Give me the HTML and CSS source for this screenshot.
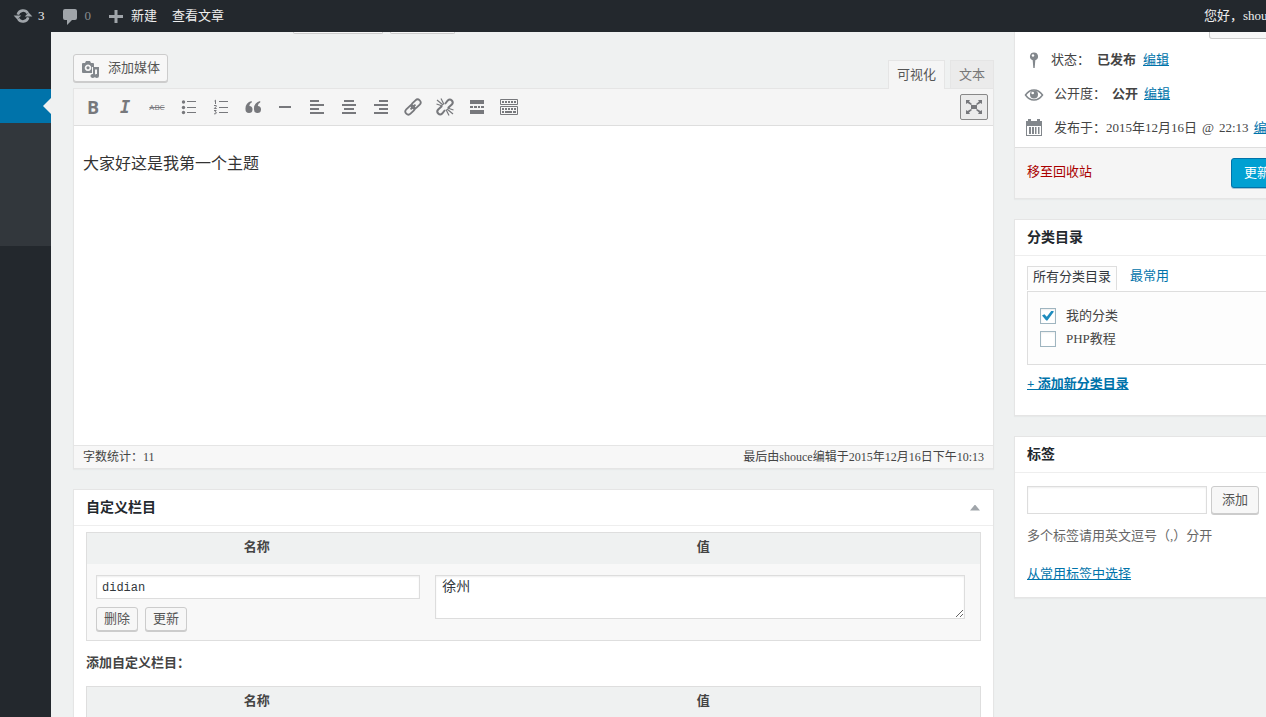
FILE: index.html
```html
<!DOCTYPE html>
<html lang="zh-CN">
<head>
<meta charset="utf-8">
<title>编辑文章</title>
<link rel="stylesheet" href="styles.css">
</head>
<body>
<header class="adminbar">
  <a class="bar-item" href="#"><svg class="bar-icon" viewBox="0 0 20 20"><path fill="none" stroke="currentColor" stroke-width="2.6" d="M4.8 8.600A5.500 5.500 0 0 1 14.800 7.200M15.200 11.400A5.500 5.500 0 0 1 5.200 12.800"/><path fill="currentColor" d="M11.800 10.600h7.600l-3.800-4.200zM.6 9.400h7.600l-3.800 4.200z"/></svg><span>3</span></a>
  <a class="bar-item muted" href="#"><svg class="bar-icon" viewBox="0 0 20 20"><path fill="currentColor" d="M5 3h10q2 0 2 2v7q0 2-2 2h-3l-5 5v-5H5q-2 0-2-2V5q0-2 2-2z"/></svg><span>0</span></a>
  <a class="bar-item" href="#"><svg class="bar-icon" viewBox="0 0 20 20"><path fill="currentColor" d="M8.500 4h3v5H17v3h-5.500v5h-3v-5H3V9h5.500z"/></svg><span>新建</span></a>
  <a class="bar-item" href="#">查看文章</a>
  <a class="bar-item account" href="#">您好，shouce</a>
</header>
<div class="frame">
  <nav class="menu" aria-label="菜单">
    <a class="menu-current" href="#" aria-label="文章"></a>
    <div class="submenu"></div>
  </nav>
  <div class="content">
    <main class="primary">
      <div class="permalink"><span class="cut cut-a"></span><span class="cut cut-b"></span></div>
      <div class="editor-tools">
        <button class="btn media" type="button"><svg class="icon" viewBox="0 0 20 20"><path fill="currentColor" fill-rule="evenodd" d="M2 3h2l1-2h4l1 2h2q1 0 1 1v3H11v6H2q-1 0-1-1V4q0-1 1-1zm5 1.500a3.300 3.300 0 1 0 .01 0zm0 1.700a1.600 1.600 0 1 1-.01 0z"/><path fill="currentColor" d="M12 7h6v9a2.300 2 0 1 1-2-2v-4.500h-2V16a2.300 2 0 1 1-2-2z"/></svg>添加媒体</button>
        <div class="tabs">
          <button class="tab active" type="button">可视化</button>
          <button class="tab" type="button">文本</button>
        </div>
      </div>
      <section class="editor">
        <div class="toolbar">
          <button class="tool bold" type="button">B</button>
          <button class="tool italic" type="button">I</button>
          <button class="tool strike" type="button">ABC</button>
          <button class="tool" type="button" aria-label="项目列表"><svg class="icon" viewBox="0 0 20 20"><g fill="currentColor"><circle cx="4.500" cy="5" r="1.700"/><circle cx="4.500" cy="10.500" r="1.700"/><circle cx="4.500" cy="15.500" r="1.700"/><path d="M8 4h9v1H8zM8 10h9v1H8zM8 15h9v1H8z"/></g></svg></button>
          <button class="tool" type="button" aria-label="编号列表"><svg class="icon" viewBox="0 0 20 20"><g fill="none" stroke="currentColor"><path d="M3.500 4l1-.8V7M3 8.500h2.200v1L3.300 11.500h2.400M3 13.500h2.200l-1.200 1.300q1.400 0 1.400 1.100t-2.400 1"/><path d="M8 4.500h9M8 10.500h9M8 15.500h9"/></g></svg></button>
          <button class="tool" type="button" aria-label="引用"><svg class="icon" viewBox="0 0 20 20"><path fill="currentColor" d="M8.700 4v1.500Q6.500 6.300 6.300 9a3.500 3.500 0 1 1-3.800 3.500Q2 5.800 8.700 4zM17.200 4v1.500Q15 6.300 14.800 9a3.500 3.500 0 1 1-3.800 3.500Q10.500 5.800 17.200 4z"/></svg></button>
          <button class="tool" type="button" aria-label="水平线"><svg class="icon" viewBox="0 0 20 20"><path fill="currentColor" d="M4 9h12v2H4z"/></svg></button>
          <button class="tool" type="button" aria-label="左对齐"><svg class="icon" viewBox="0 0 20 20"><path fill="currentColor" d="M3 3h9v2H3zM3 7h14v2H3zM3 11h9v2H3zM3 15h14v2H3z"/></svg></button>
          <button class="tool" type="button" aria-label="居中"><svg class="icon" viewBox="0 0 20 20"><path fill="currentColor" d="M5 3h10v2H5zM3 7h14v2H3zM5 11h10v2H5zM3 15h14v2H3z"/></svg></button>
          <button class="tool" type="button" aria-label="右对齐"><svg class="icon" viewBox="0 0 20 20"><path fill="currentColor" d="M8 3h9v2H8zM3 7h14v2H3zM8 11h9v2H8zM3 15h14v2H3z"/></svg></button>
          <button class="tool" type="button" aria-label="插入链接"><svg class="icon" viewBox="0 0 20 20"><g transform="rotate(-45 10 10)" fill="none" stroke="currentColor" stroke-width="1.800"><rect x="0.500" y="7" width="10.500" height="6" rx="3"/><rect x="9" y="7" width="10.500" height="6" rx="3"/><path d="M6.500 10h7"/></g></svg></button>
          <button class="tool" type="button" aria-label="移除链接"><svg class="icon" viewBox="0 0 20 20"><g fill="none" stroke="currentColor" stroke-width="2"><path d="M10 7l2.800-3.500q2-2 4 0t0 4L13 11M10 13l-2.800 3.500q-2 2-4 0t0-4L7 9"/><path stroke-width="1.200" d="M2 3l6 5M6 1.500l3 6M1.500 7l6 2M18 17l-6-5M14 18.500l-3-6M18.500 13l-6-2"/></g></svg></button>
          <button class="tool" type="button" aria-label="插入More标签"><svg class="icon" viewBox="0 0 20 20"><path fill="currentColor" d="M3 3h14v4H3zM3 9h3v2H3zM7 9h3v2H7zM11 9h2v2h-2zM14 9h3v2h-3zM3 13h14v4H3z"/></svg></button>
          <button class="tool" type="button" aria-label="工具栏切换"><svg class="icon" viewBox="0 0 20 20"><path fill="none" stroke="currentColor" d="M1.500 2.500h17v5h-17zM1.500 9.500h17v8h-17z"/><path stroke="currentColor" stroke-width="2" stroke-dasharray="2 1" d="M3 5h14M3 12h14"/><path stroke="currentColor" stroke-width="2" d="M3 15h2M6 15h7M14 15h3"/></svg></button>
          <button class="fullscreen" type="button" aria-label="全屏"><svg class="icon" viewBox="0 0 20 20"><path fill="currentColor" d="M7 8h6v4H7zM2 3h4L5 4.500 8 7 7 8 3.500 6 2 7zM18 3h-4l1 1.500L12 7l1 1 3.500-2L18 7zM2 17h4l-1-1.500L8 13l-1-1-3.500 2L2 13zM18 17h-4l1-1.500L12 13l1-1 3.500 2 1.500-1z"/></svg></button>
        </div>
        <div class="document" contenteditable="true" spellcheck="false">大家好这是我第一个主题</div>
        <footer class="status"><span>字数统计：11</span><span>最后由shouce编辑于2015年12月16日下午10:13</span></footer>
      </section>
      <section class="box fields">
        <div class="box-head"><h2>自定义栏目</h2><button class="toggle" type="button" aria-label="折叠"></button></div>
        <div class="fields-body">
          <table class="meta">
            <thead><tr><th class="name-col">名称</th><th>值</th></tr></thead>
            <tbody><tr>
              <td><input class="text-input meta-key" type="text" value="didian" aria-label="名称"><div class="meta-actions"><button class="btn small" type="button">删除</button><button class="btn small" type="button">更新</button></div></td>
              <td><textarea class="meta-value" aria-label="值">徐州</textarea></td>
            </tr></tbody>
          </table>
          <p class="add-title">添加自定义栏目：</p>
          <table class="meta">
            <thead><tr><th class="name-col">名称</th><th>值</th></tr></thead>
          </table>
        </div>
      </section>
    </main>
    <aside class="secondary">
      <section class="box publish">
        <div class="preview-row"><span class="cut cut-c"></span></div>
        <div class="row"><svg class="icon" viewBox="0 0 20 20"><path fill="currentColor" d="M10 2.500a4 4 0 0 1 1.300 7.800L10.700 18H9.300l-.6-7.700A4 4 0 0 1 10 2.500z"/><circle cx="9" cy="5.500" r="1.200" fill="#fff"/></svg><span>状态：</span><strong>已发布</strong><a href="#">编辑</a></div>
        <div class="row wide"><svg class="icon" viewBox="0 0 20 20"><path fill="none" stroke="currentColor" stroke-width="1.500" d="M1.500 11Q5 6 10 6t8.500 5Q15 16 10 16t-8.500-5z"/><circle cx="10" cy="10.500" r="4" fill="currentColor"/><circle cx="8.700" cy="9" r="1.300" fill="#fff"/></svg><span>公开度：</span><strong>公开</strong><a href="#">编辑</a></div>
        <div class="row date"><svg class="icon" viewBox="0 0 20 20"><path fill="currentColor" fill-rule="evenodd" d="M2 3h2V1h3v2h6V1h3v2h2v15H2zm1 5v9h14V8z"/><path fill="currentColor" d="M5 9h2v7H5zM8 9h2v7H8zM11 9h1.500v7H11zM14 9h1.500v7H14z"/></svg><span>发布于：2015年12月16日</span><span>@</span><span>22:13</span><a href="#">编辑</a></div>
        <footer class="publish-foot"><a class="trash" href="#">移至回收站</a><button class="btn primary-btn" type="button">更新</button></footer>
      </section>
      <section class="box categories">
        <div class="box-head"><h2>分类目录</h2></div>
        <div class="box-body">
          <div class="cat-tabs"><a class="cat-tab on" href="#">所有分类目录</a><a class="cat-tab" href="#">最常用</a></div>
          <div class="cat-list">
            <label class="cat"><input class="check" type="checkbox" checked>我的分类</label>
            <label class="cat"><input class="check" type="checkbox">PHP教程</label>
          </div>
          <a class="add-cat" href="#">+ 添加新分类目录</a>
        </div>
      </section>
      <section class="box tags">
        <div class="box-head"><h2>标签</h2></div>
        <div class="tags-body">
          <div class="tag-form"><input class="text-input tag-input" type="text" aria-label="标签"><button class="btn" type="button">添加</button></div>
          <p class="hint">多个标签请用英文逗号（,）分开</p>
          <a href="#">从常用标签中选择</a>
        </div>
      </section>
    </aside>
  </div>
</div>
</body>
</html>
```

FILE: styles.css
```css
* { box-sizing: border-box; }
html, body { height: 100%; }
body {
  margin: 0;
  overflow: hidden;
  background: #eff1f1;
  color: #444;
  font: 13px/20px "Liberation Serif", "Noto Sans CJK SC", serif;
}
button, input, textarea { font: inherit; color: inherit; margin: 0; }
a { color: #0073aa; }
h2, p { margin: 0; }

.adminbar {
  display: flex;
  align-items: center;
  gap: 15px;
  width: calc(100% + 48px);
  height: 32px;
  padding: 0 35px 0 13px;
  background: #23282d;
}
.bar-item { display: flex; align-items: center; gap: 5px; color: #eee; text-decoration: none; white-space: nowrap; }
.bar-icon { width: 20px; height: 20px; color: #a0a5aa; }
.muted { color: #888c90; }
.account { margin-left: auto; }

.frame { display: flex; width: calc(100% + 48px); height: calc(100% - 32px); overflow: hidden; }
.menu { flex: none; width: 51px; padding-top: 57px; background: #23282d; }
.menu-current { display: flex; align-items: center; justify-content: flex-end; height: 34px; background: #0073aa; }
.menu-current::after { content: ""; border: 8px solid transparent; border-left: 0; border-right-color: #eff1f1; }
.submenu { height: 123px; background: #32373c; }

.content { flex: 1; display: flex; align-items: flex-start; gap: 20px; padding: 0 20px 0 22px; min-width: 0; }
.primary { flex: 1; min-width: 0; }
.secondary { flex: none; width: 280px; }

.permalink { display: flex; gap: 7px; height: 22px; padding-left: 220px; }
.cut { height: 2px; border: 1px solid #ccc; border-top: 0; border-radius: 0 0 3px 3px; background: #f7f7f7; }
.cut-a { width: 90px; }
.cut-b { width: 65px; }

.btn {
  height: 28px;
  padding: 0 10px;
  border: 1px solid #ccc;
  border-radius: 3px;
  background: #f7f7f7;
  box-shadow: 0 1px 0 #ccc;
  color: #555;
  white-space: nowrap;
}
.small { height: 24px; padding: 0 7px; line-height: 22px; }
.icon { display: block; flex: none; width: 20px; height: 20px; }

.editor-tools { display: flex; justify-content: space-between; height: 34px; }
.media { display: flex; align-items: center; gap: 7px; padding: 0 7px; }
.media .icon { margin-top: 4px; color: #82878c; }
.tabs { display: flex; align-items: flex-end; gap: 5px; }
.tab { height: 28px; padding: 0 8px; border: 1px solid #e5e5e5; border-bottom: 0; background: #ebebeb; color: #777; }
.active { position: relative; height: 29px; margin-bottom: -1px; background: #f5f5f5; color: #555; }

.editor { border: 1px solid #e5e5e5; background: #fff; box-shadow: 0 1px 1px #e7e9e9; }
.toolbar { display: flex; align-items: center; height: 37px; padding: 0 5px 0 3px; border-bottom: 1px solid #dedede; background: #f5f5f5; }
.tool { display: flex; align-items: center; justify-content: center; width: 32px; height: 28px; padding: 0; border: 0; background: none; color: #77787c; }
.bold { font: bold 18px/20px "Open Sans", sans-serif; }
.italic { font: italic bold 17px/20px "DejaVu Sans Mono", monospace; }
.strike { font: 8px/20px "Open Sans", sans-serif; text-decoration: line-through; }
.fullscreen { display: flex; align-items: center; justify-content: center; width: 28px; height: 26px; margin-left: auto; padding: 0; border: 1px solid #888; border-radius: 2px; background: #ebebeb; color: #77787c; }
.document { height: 319px; padding: 26px 9px; color: #333; font-size: 16px; line-height: 24px; outline: 0; }
.status { display: flex; justify-content: space-between; padding: 0 9px; border-top: 1px solid #e5e5e5; background: #f7f7f7; font-size: 12px; line-height: 22px; }

.box { margin-bottom: 20px; border: 1px solid #e5e5e5; background: #fff; box-shadow: 0 1px 1px #e7e9e9; }
.box-head { display: flex; align-items: center; justify-content: space-between; height: 36px; padding: 0 12px; border-bottom: 1px solid #eee; }
.box-head h2 { color: #23282d; font-size: 14px; line-height: 20px; }
.toggle { width: 10px; height: 6px; margin-right: 1px; padding: 0; border: 0; background: #a0a5aa; clip-path: polygon(50% 0, 100% 100%, 0 100%); }
.fields { margin-top: 20px; }
.fields-body { padding: 6px 12px; }
.meta { width: 100%; border: 1px solid #dedede; border-spacing: 0; table-layout: fixed; background: #f8f8f8; }
.meta th { height: 31px; padding: 0 0 3px; background: #eff1f1; }
.name-col { width: 38%; }
.meta td { height: 76px; padding: 11px 6px 8px 9px; vertical-align: top; }
.meta td + td { padding: 11px 15px 0 9px; }
.text-input, .meta-value { display: block; border: 1px solid #ddd; border-radius: 0; background: #fff; box-shadow: inset 0 1px 2px #eee; color: #32373c; outline: 0; }
.meta-key { width: 100%; height: 24px; padding: 1px 5px 0; font-family: "Liberation Mono", monospace; font-size: 12px; }
.meta-actions { display: flex; gap: 7px; margin-top: 8px; }
.meta-value { width: 100%; height: 44px; padding: 1px 6px; font-size: 14px; line-height: 20px; }
.add-title { margin: 12px 0 13px; font-weight: bold; }

.publish { border-top: 0; }
.preview-row { display: flex; justify-content: flex-end; height: 11px; padding-right: 9px; }
.cut-c { width: 75px; height: 7px; }
.row { display: flex; align-items: center; gap: 7px; height: 34px; padding-left: 9px; white-space: nowrap; }
.row .icon { color: #82878c; }
.wide { gap: 6px; }
.wide .icon { margin-right: 4px; }
.date { gap: 5px; }
.date .icon { margin-right: 5px; }
.publish-foot { display: flex; justify-content: space-between; height: 51px; margin-top: 2px; padding: 10px 10px 10px 12px; border-top: 1px solid #dedede; background: #f5f5f5; }
.trash { padding-top: 4px; color: #a00; text-decoration: none; }
.primary-btn { height: 30px; padding: 0 12px; border-color: #0073aa; background: #00a0d2; box-shadow: 0 1px 0 #a5c4d2; color: #fff; }

.box-body { padding: 10px 12px 21px; }
.cat-tabs { display: flex; height: 25px; gap: 7px; }
.cat-tab { height: 24px; padding: 0 6px; text-decoration: none; line-height: 20px; }
.on { padding: 0 5px; border: 1px solid #dedede; border-bottom: 0; background: #fdfdfd; color: #32373c; line-height: 19px; }
.cat-list { height: 74px; padding: 12px; border: 1px solid #dedede; background: #fdfdfd; }
.cat { display: flex; align-items: center; gap: 10px; height: 23px; }
.check { appearance: none; display: grid; place-items: center; width: 16px; height: 16px; border: 1px solid #9fb5c0; background: #fff; box-shadow: inset 0 1px 2px #eee; }
.check:checked::before { content: ""; width: 12px; height: 10px; background: #1e8cbe; clip-path: polygon(0 50%, 20% 38%, 40% 62%, 80% 0, 100% 10%, 45% 100%, 35% 100%); }
.add-cat { display: block; margin-top: 9px; font-weight: bold; }

.tags-body { padding: 13px 12px; }
.tag-form { display: flex; gap: 4px; }
.tag-input { width: 180px; height: 28px; padding: 3px 5px; }
.hint { margin: 12px 0 18px; color: #666; }
```
